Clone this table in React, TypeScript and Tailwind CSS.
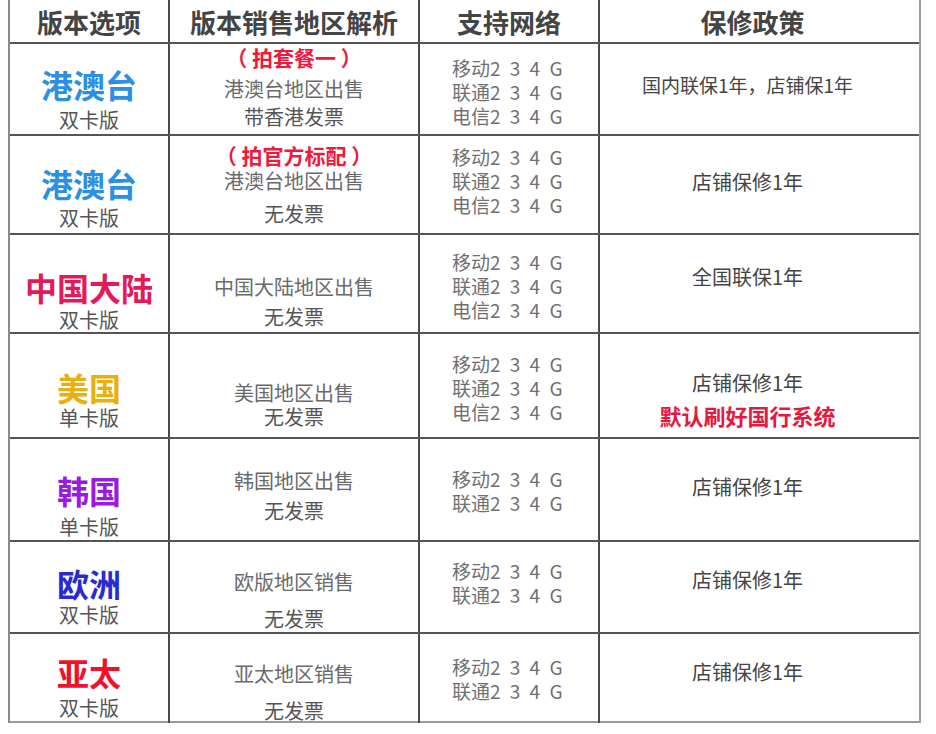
import React from "react";

type Line = { text: string; cls: string };

interface RowData {
  h: string;
  c1pt: string;
  name: Line;
  sub: Line;
  c2pt: string;
  c2: Line[];
  c3pt: string;
  nets: string[];
  c4pt: string;
  c4: Line[];
  last?: boolean;
}

const gray = "text-[20px] leading-[24px] text-[#6a6a6a]";
const dark = "text-[20px] leading-[24px] text-[#555]";
const red = "text-[21px] leading-[24px] font-bold text-[#f0183c] whitespace-pre";
const policy = "text-[20px] leading-[24px] text-[#444]";

const three = ["移动", "联通", "电信"];
const two = ["移动", "联通"];

const rows: RowData[] = [
  {
    h: "h-[92px]",
    c1pt: "pt-[24px]",
    name: { text: "港澳台", cls: "text-[#2b8fe3]" },
    sub: { text: "双卡版", cls: "mt-[9px]" },
    c2pt: "pt-[1px]",
    c2: [
      { text: "（ 拍套餐一 ）", cls: red },
      { text: "港澳台地区出售", cls: gray + " mt-[8px]" },
      { text: "带香港发票", cls: dark + " mt-[4px]" },
    ],
    c3pt: "pt-[12px]",
    nets: three,
    c4pt: "pt-[29px]",
    c4: [{ text: "国内联保1年，店铺保1年", cls: "text-[19px] leading-[24px] text-[#444]" }],
  },
  {
    h: "h-[99px]",
    c1pt: "pt-[31px]",
    name: { text: "港澳台", cls: "text-[#2b8fe3]" },
    sub: { text: "双卡版", cls: "mt-[8px]" },
    c2pt: "pt-[7px]",
    c2: [
      { text: "（ 拍官方标配 ）", cls: red },
      { text: "港澳台地区出售", cls: gray + " mt-[2px]" },
      { text: "无发票", cls: dark + " mt-[9px]" },
    ],
    c3pt: "pt-[9px]",
    nets: three,
    c4pt: "pt-[34px]",
    c4: [{ text: "店铺保修1年", cls: policy }],
  },
  {
    h: "h-[99px]",
    c1pt: "pt-[36px]",
    name: { text: "中国大陆", cls: "text-[#e3195a]" },
    sub: { text: "双卡版", cls: "mt-[6px]" },
    c2pt: "pt-[40px]",
    c2: [
      { text: "中国大陆地区出售", cls: gray },
      { text: "无发票", cls: dark + " mt-[6px]" },
    ],
    c3pt: "pt-[15px]",
    nets: three,
    c4pt: "pt-[30px]",
    c4: [{ text: "全国联保1年", cls: policy }],
  },
  {
    h: "h-[105px]",
    c1pt: "pt-[37px]",
    name: { text: "美国", cls: "text-[#e9b00c]" },
    sub: { text: "单卡版", cls: "mt-[4px]" },
    c2pt: "pt-[47px]",
    c2: [
      { text: "美国地区出售", cls: gray },
      { text: "无发票", cls: dark },
    ],
    c3pt: "pt-[18px]",
    nets: three,
    c4pt: "pt-[37px]",
    c4: [
      { text: "店铺保修1年", cls: policy },
      { text: "默认刷好国行系统", cls: "text-[22px] leading-[24px] font-bold text-[#e8173f] mt-[8px]" },
    ],
  },
  {
    h: "h-[103px]",
    c1pt: "pt-[35px]",
    name: { text: "韩国", cls: "text-[#9a1be0]" },
    sub: { text: "单卡版", cls: "mt-[10px]" },
    c2pt: "pt-[30px]",
    c2: [
      { text: "韩国地区出售", cls: gray },
      { text: "无发票", cls: dark + " mt-[6px]" },
    ],
    c3pt: "pt-[28px]",
    nets: two,
    c4pt: "pt-[36px]",
    c4: [{ text: "店铺保修1年", cls: policy }],
  },
  {
    h: "h-[92px]",
    c1pt: "pt-[25px]",
    name: { text: "欧洲", cls: "text-[#2a2ad2]" },
    sub: { text: "双卡版", cls: "mt-[5px]" },
    c2pt: "pt-[28px]",
    c2: [
      { text: "欧版地区销售", cls: gray },
      { text: "无发票", cls: dark + " mt-[13px]" },
    ],
    c3pt: "pt-[17px]",
    nets: two,
    c4pt: "pt-[26px]",
    c4: [{ text: "店铺保修1年", cls: policy }],
  },
  {
    h: "h-[89px]",
    c1pt: "pt-[22px]",
    name: { text: "亚太", cls: "text-[#f0102c]" },
    sub: { text: "双卡版", cls: "mt-[9px]" },
    c2pt: "pt-[28px]",
    c2: [
      { text: "亚太地区销售", cls: gray },
      { text: "无发票", cls: dark + " mt-[13px]" },
    ],
    c3pt: "pt-[21px]",
    nets: two,
    c4pt: "pt-[26px]",
    c4: [{ text: "店铺保修1年", cls: policy }],
    last: true,
  },
];

const grid = "grid grid-cols-[160px_250px_180px_319px]";
const cellR = "border-r-2 border-[#4a4a4a]";

const Row: React.FC<{ row: RowData }> = ({ row }) => {
  return (
    <div
      className={`${grid} ${row.h} border-b-2 ${
        row.last ? "border-[#9a9a9a]" : "border-[#555]"
      }`}
    >
      <div className={`${cellR} ${row.c1pt} flex flex-col items-center`}>
        <div className={`text-[32px] leading-[32px] font-bold ${row.name.cls}`}>
          {row.name.text}
        </div>
        <div className={`text-[20px] leading-[22px] text-[#555] ${row.sub.cls}`}>
          {row.sub.text}
        </div>
      </div>
      <div className={`${cellR} ${row.c2pt} flex flex-col items-center`}>
        {row.c2.map((l, i) => (
          <div key={i} className={l.cls}>
            {l.text}
          </div>
        ))}
      </div>
      <div className={`${cellR} ${row.c3pt} pl-[32px] flex flex-col items-start`}>
        {row.nets.map((n) => (
          <div
            key={n}
            className="text-[19px] leading-[24px] text-[#707070] [word-spacing:5px]"
          >
            {n}2 3 4 G
          </div>
        ))}
      </div>
      <div className={`${row.c4pt} pr-[24px] flex flex-col items-center`}>
        {row.c4.map((l, i) => (
          <div key={i} className={l.cls}>
            {l.text}
          </div>
        ))}
      </div>
    </div>
  );
};

export default function App() {
  return (
    <div className="w-[936px] h-[734px] bg-white font-['Noto_Sans_CJK_SC','Noto_Sans',sans-serif]">
      <div className="ml-[8px] w-[913px] border-l-2 border-[#8a8a8a] border-r-2 border-r-[#a0a0a0]">
        <div className={`${grid} h-[44px] border-b-2 border-[#555] text-[26px] font-bold text-[#444]`}>
          <div className={`${cellR} flex items-center justify-center`}>版本选项</div>
          <div className={`${cellR} flex items-center justify-center`}>版本销售地区解析</div>
          <div className={`${cellR} flex items-center justify-center`}>支持网络</div>
          <div className="flex items-center justify-center pr-[14px]">保修政策</div>
        </div>
        {rows.map((r, i) => (
          <Row key={i} row={r} />
        ))}
      </div>
    </div>
  );
}
